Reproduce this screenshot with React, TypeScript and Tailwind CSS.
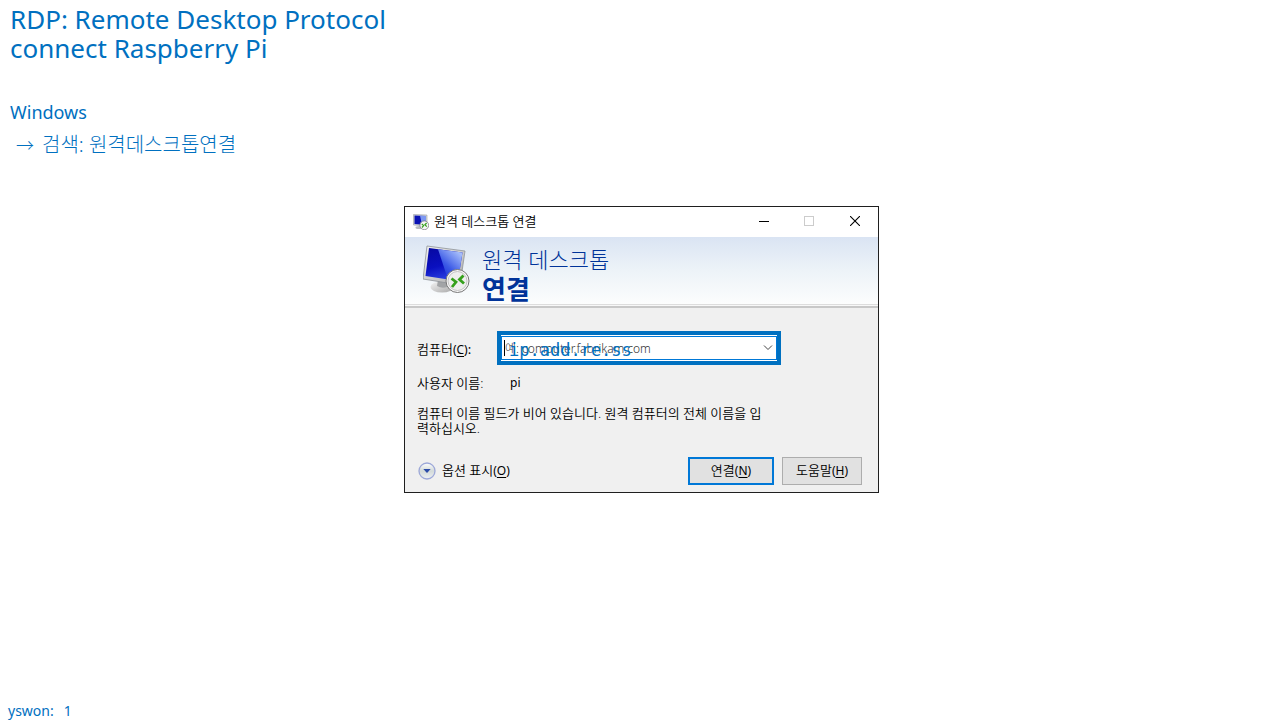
import { useId } from "react";

function RemoteIcon() {
  const id = useId().replace(/[^a-zA-Z0-9]/g, "");
  return (
    <svg viewBox="0 0 48 48" className="size-12" aria-hidden="true">
      <defs>
        <linearGradient id={`${id}s`} x1="0" y1="0" x2="0.3" y2="1">
          <stop offset="0" stopColor="#0608a0" />
          <stop offset="0.6" stopColor="#0a10c0" />
          <stop offset="1" stopColor="#2a3ee0" />
        </linearGradient>
        <linearGradient id={`${id}g`} x1="0" y1="1" x2="0.7" y2="0">
          <stop offset="0" stopColor="#0e1ccc" />
          <stop offset="0.5" stopColor="#3c5ae6" />
          <stop offset="1" stopColor="#a4bcfa" />
        </linearGradient>
        <linearGradient id={`${id}b`} x1="0" y1="0" x2="1" y2="1">
          <stop offset="0" stopColor="#f4f4f4" />
          <stop offset="1" stopColor="#a8a8a8" />
        </linearGradient>
      </defs>
      <ellipse cx="19" cy="42" rx="11.5" ry="5.5" fill={`url(#${id}b)`} />
      <path d="M15 35L25 37L24 42Q19 44 14 41Z" fill="#a2a4a6" />
      <path d="M4 1L42 6L37 40L0 34Z" fill={`url(#${id}b)`} stroke="#8e9398" strokeWidth="0.8" />
      <path d="M6 3L39.500 7.500L35 36L2.500 31Z" fill={`url(#${id}s)`} />
      <path d="M15 4.200L39.500 7.500L35 36L25 34.500Z" fill={`url(#${id}g)`} />
      <circle cx="34.500" cy="36" r="11.500" fill="#f8f8f8" stroke="#777" strokeWidth="1" />
      <circle cx="34.500" cy="36" r="9.500" fill="#eeeeee" stroke="#bdbdbd" strokeWidth="0.9" />
      <path d="M28.500 33.500L33 37L29 42M40.500 30.500L36.500 34.500L41 38.500" fill="none" stroke="#35a01c" strokeWidth="2.800" />
    </svg>
  );
}

function SmallRemoteIcon() {
  return (
    <svg viewBox="0 0 16 16" className="size-4" aria-hidden="true">
      <ellipse cx="6" cy="13.500" rx="3.500" ry="1.500" fill="#b9bcc0" />
      <path d="M0.500 0.500L14 1V12L0.500 11Z" fill="#d4d7da" stroke="#9a9ea3" strokeWidth="0.6" />
      <path d="M1.500 1.500L13 2V11L1.500 10Z" fill="#0a12b4" />
      <path d="M7 1.700L13 2V11L9 10.600Z" fill="#7d98f2" />
      <circle cx="11.300" cy="11.300" r="4.400" fill="#f4f4f4" stroke="#777" strokeWidth="0.7" />
      <path d="M8.800 10L10.600 11.600L9 13.500M13.600 9L11.900 10.800L13.800 12.600" fill="none" stroke="#35a01c" strokeWidth="1.200" />
    </svg>
  );
}

function Shortcut({ letter }: { letter: string }) {
  return (
    <span className="text-xs">
      (<span className="underline underline-offset-2">{letter}</span>)
    </span>
  );
}

function RemoteDesktopDialog() {
  return (
    <section
      aria-label="원격 데스크톱 연결"
      className="w-full max-w-[475px] border border-[#1f1f1f] bg-[#f0f0f0] text-[13px] text-black"
    >
      <header className="flex h-[30px] items-center bg-white pl-2">
        <SmallRemoteIcon />
        <span className="ml-[5px] grow font-[350]">원격 데스크톱 연결</span>
        <button type="button" aria-label="최소화" className="flex h-7 w-[45px] items-center justify-center self-start">
          <svg viewBox="0 0 10 10" className="size-[10px]" stroke="#000" shapeRendering="crispEdges">
            <path d="M0 5.500H10" />
          </svg>
        </button>
        <button type="button" aria-label="최대화" disabled className="flex h-7 w-[46px] items-center justify-center self-start">
          <svg viewBox="0 0 10 10" className="size-[10px]" fill="none" stroke="#cccccc" shapeRendering="crispEdges">
            <path d="M0.500 0.500H9.500V9.500H0.500Z" />
          </svg>
        </button>
        <button type="button" aria-label="닫기" className="flex h-7 w-[46px] items-center justify-center self-start">
          <svg viewBox="0 0 10 10" className="size-[10px]" stroke="#000" strokeWidth="1.1">
            <path d="M0 0L10 10M10 0L0 10" />
          </svg>
        </button>
      </header>

      <div className="flex h-[67px] gap-[11px] bg-linear-to-b from-[#dae4f3] via-[#edf3f8] to-[#fcfdfd] pt-2 pl-[18px] text-[#003399]">
        <RemoteIcon />
        <h2 className="text-[22px] leading-7">
          <span className="block font-light">원격 데스크톱</span>
          <strong className="block text-[26px] leading-8 font-bold">연결</strong>
        </h2>
      </div>
      <div className="h-1 border-t border-b-2 border-t-[#dddddd] border-b-[#c8c8c8] bg-[#f8f8f8]" />

      <form className="pt-[23px] pr-4 pb-[7px] pl-3" onSubmit={(event) => event.preventDefault()}>
        <div className="flex items-center">
          <label htmlFor="computer" className="w-20 pt-1">
            <span className="font-[350]">컴퓨터</span>
            <Shortcut letter="C" />:
          </label>
          <div className="relative h-[34px] w-[284px] border-4 border-[#0070c0] bg-white py-px">
            <div className="flex h-6 items-center border border-[#0078d7] pr-[3px]">
              <input
                id="computer"
                type="text"
                placeholder="예: computer.fabrikam.com"
                className="h-full min-w-0 grow bg-transparent pl-[3px] text-xs font-light outline-none placeholder:text-[#333333]"
              />
              <button type="button" aria-label="컴퓨터 목록 열기">
                <svg viewBox="0 0 10 6" className="h-[6px] w-[10px]" fill="none" stroke="#444">
                  <path d="M1 0.500L5 4.500L9 0.500" />
                </svg>
              </button>
            </div>
            <span className="absolute top-[5px] left-[3px] h-4 w-px bg-black" />
            <span className="pointer-events-none absolute top-[3px] left-2 font-['DejaVu_Sans_Mono',monospace] text-[17px] leading-6 text-[#0070c0]">
              ip.add.re.ss
            </span>
          </div>
        </div>

        <dl className="mt-2 flex leading-5">
          <dt className="w-[93px] font-[350]">사용자 이름:</dt>
          <dd className="text-xs leading-5">pi</dd>
        </dl>

        <p className="mt-[13px] w-[356px] leading-[15px] font-[350] break-all">
          컴퓨터 이름 필드가 비어 있습니다. 원격 컴퓨터의 전체 이름을 입력하십시오.
        </p>

        <div className="mt-[21px] flex items-center gap-2">
          <button type="button" className="mr-auto flex items-center gap-[6px] pl-px">
            <svg viewBox="0 0 18 18" className="size-[18px]" aria-hidden="true">
              <defs>
                <linearGradient id="toggle" x1="0" y1="0" x2="0" y2="1">
                  <stop offset="0" stopColor="#ffffff" />
                  <stop offset="0.5" stopColor="#d3dad9" />
                  <stop offset="1" stopColor="#eef1f4" />
                </linearGradient>
              </defs>
              <circle cx="9" cy="9" r="8" fill="url(#toggle)" stroke="#9da8d8" strokeWidth="1.300" />
              <path d="M5.300 7H12.700L9 11Z" fill="#2b4ba8" />
            </svg>
            <span>
              <span className="font-[350]">옵션 표시</span>
              <Shortcut letter="O" />
            </span>
          </button>
          <button type="submit" className="h-7 w-[86px] border-2 border-[#0078d7] bg-[#e1e1e1]">
            <span className="font-[350]">연결</span>
            <Shortcut letter="N" />
          </button>
          <button type="button" className="h-7 w-20 border border-[#adadad] bg-[#e1e1e1]">
            <span className="font-[350]">도움말</span>
            <Shortcut letter="H" />
          </button>
        </div>
      </form>
    </section>
  );
}

export default function App() {
  return (
    <main className="flex min-h-screen flex-col bg-white font-['Noto_Sans','Noto_Sans_CJK_KR',sans-serif] text-[#0070c0]">
      <h1 className="px-[10px] pt-[5px] text-[26px] leading-[29px]">
        RDP: Remote Desktop Protocol
        <br />
        connect Raspberry Pi
      </h1>
      <div className="mt-[33px] px-[10px] text-xl leading-8">
        <p className="text-lg leading-8">Windows</p>
        <p className="flex gap-2 pt-px pl-[6px] font-light">
          <span className="text-lg leading-8">→</span>
          <span>검색: 원격데스크톱연결</span>
        </p>
      </div>
      <div className="mt-[45px] flex justify-center pl-[3px]">
        <RemoteDesktopDialog />
      </div>
      <footer className="mt-auto flex gap-[10px] px-2 text-sm leading-[18px]">
        <span>yswon:</span>
        <span>1</span>
      </footer>
    </main>
  );
}
